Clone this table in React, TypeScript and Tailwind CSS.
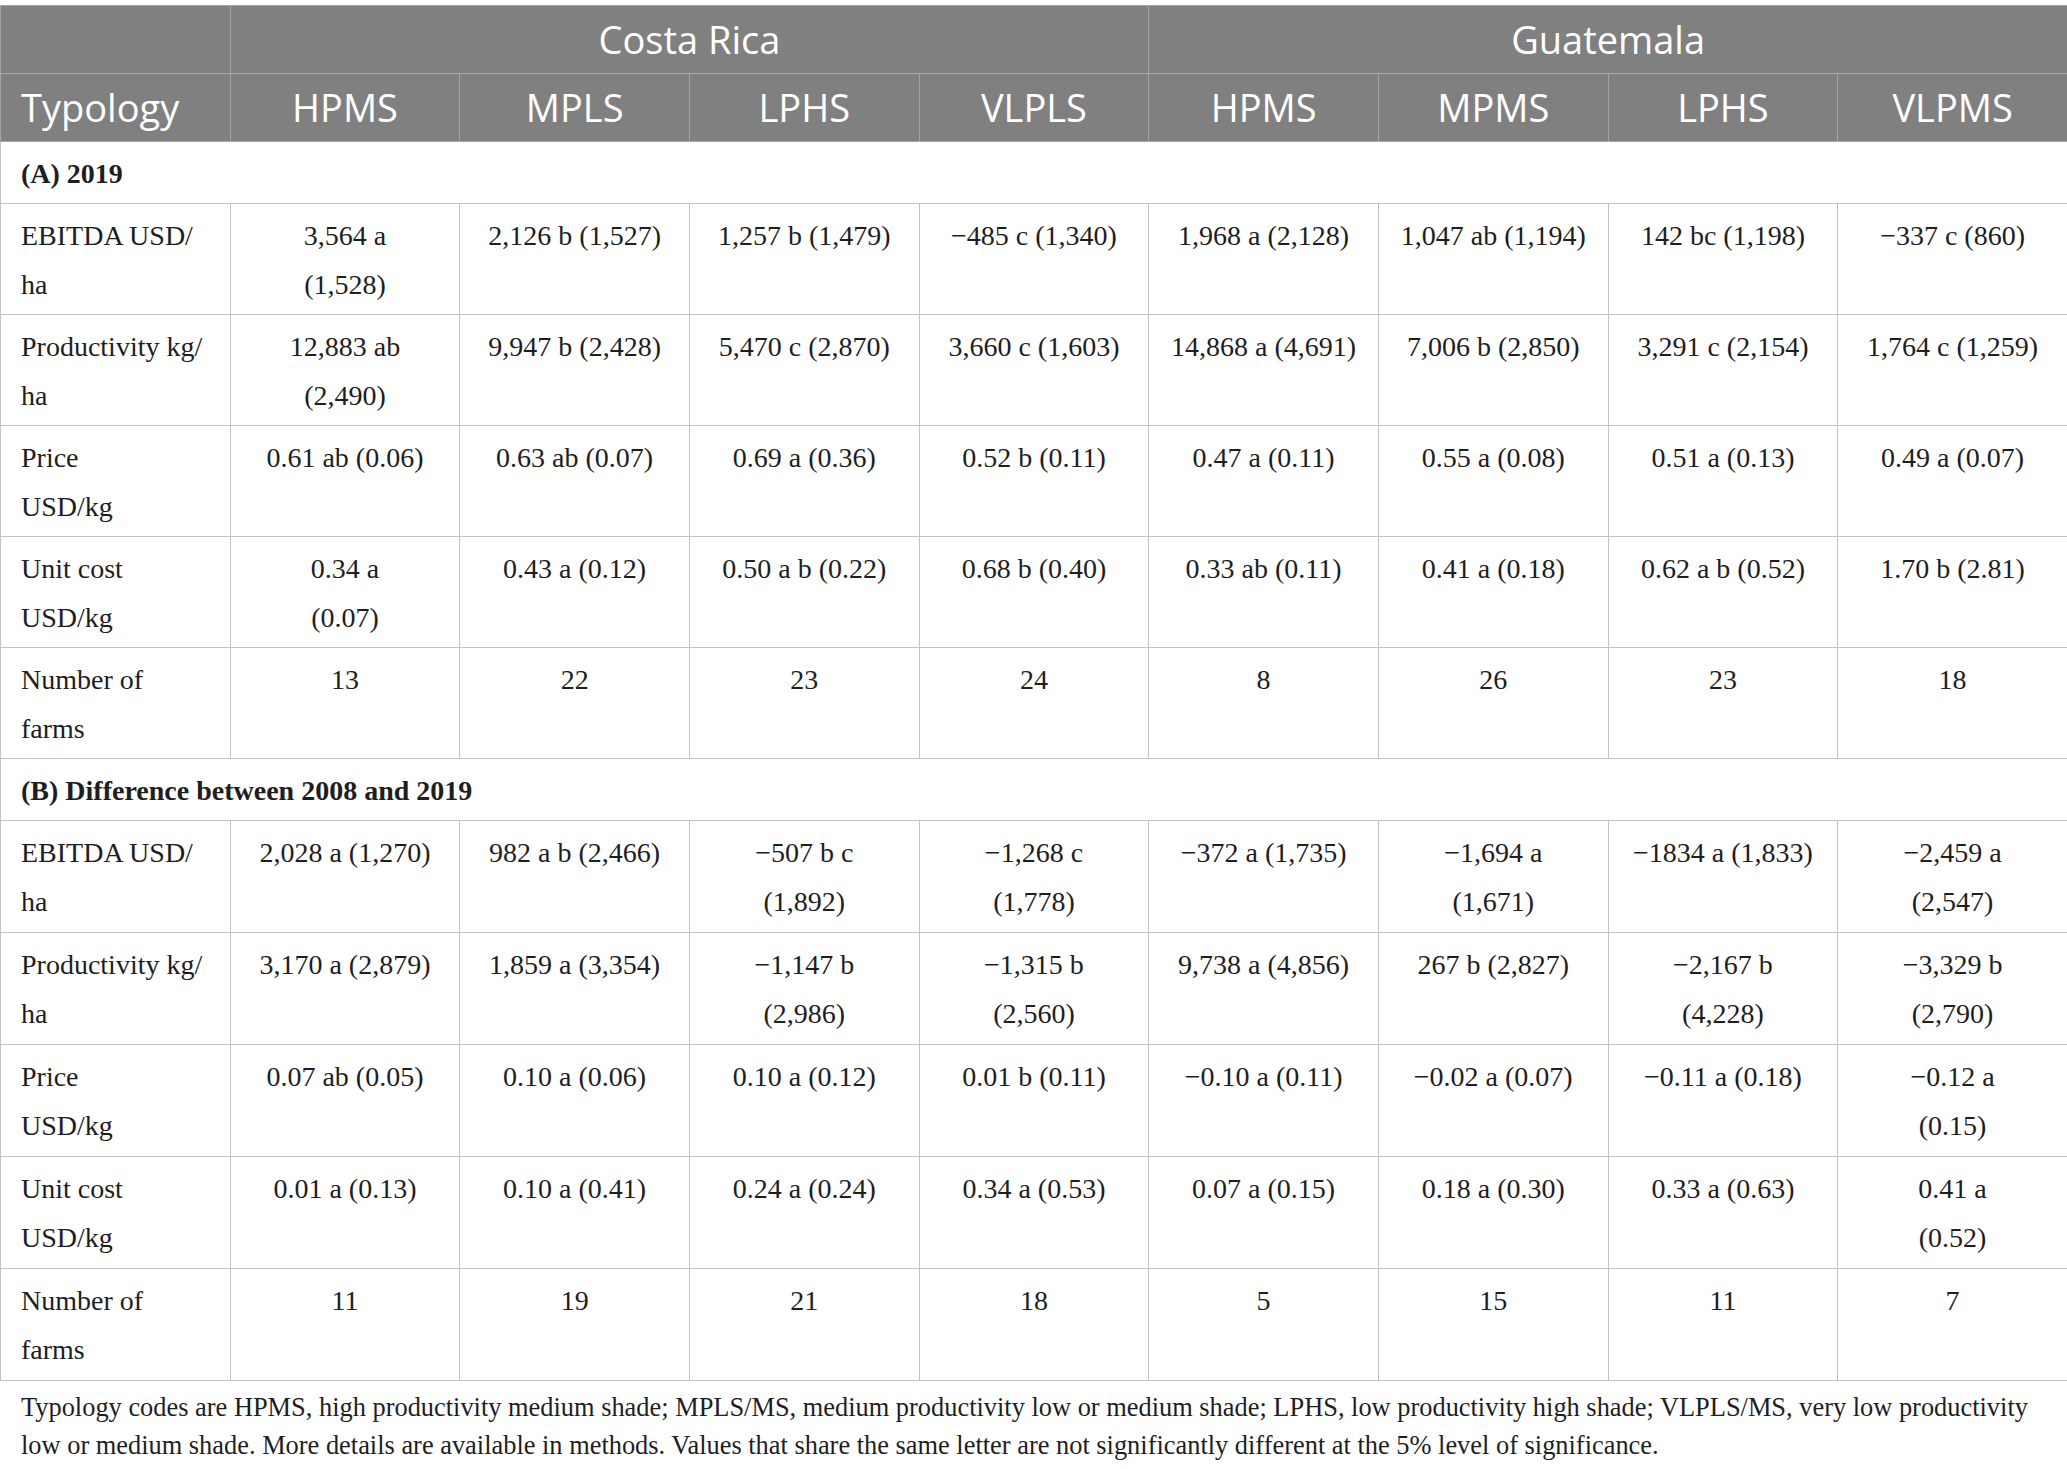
import React from 'react';

type Cell = string | string[];
type Row = { label: string[]; cells: Cell[] };

const SERIF = "font-['Liberation_Serif','Times_New_Roman',serif]";
const SANS = "font-['Open_Sans','Noto_Sans',sans-serif]";

const sectionA: Row[] = [
  {
    label: ['EBITDA USD/', 'ha'],
    cells: [['3,564 a', '(1,528)'], '2,126 b (1,527)', '1,257 b (1,479)', '−485 c (1,340)', '1,968 a (2,128)', '1,047 ab (1,194)', '142 bc (1,198)', '−337 c (860)'],
  },
  {
    label: ['Productivity kg/', 'ha'],
    cells: [['12,883 ab', '(2,490)'], '9,947 b (2,428)', '5,470 c (2,870)', '3,660 c (1,603)', '14,868 a (4,691)', '7,006 b (2,850)', '3,291 c (2,154)', '1,764 c (1,259)'],
  },
  {
    label: ['Price', 'USD/kg'],
    cells: ['0.61 ab (0.06)', '0.63 ab (0.07)', '0.69 a (0.36)', '0.52 b (0.11)', '0.47 a (0.11)', '0.55 a (0.08)', '0.51 a (0.13)', '0.49 a (0.07)'],
  },
  {
    label: ['Unit cost', 'USD/kg'],
    cells: [['0.34 a', '(0.07)'], '0.43 a (0.12)', '0.50 a b (0.22)', '0.68 b (0.40)', '0.33 ab (0.11)', '0.41 a (0.18)', '0.62 a b (0.52)', '1.70 b (2.81)'],
  },
  {
    label: ['Number of', 'farms'],
    cells: ['13', '22', '23', '24', '8', '26', '23', '18'],
  },
];

const sectionB: Row[] = [
  {
    label: ['EBITDA USD/', 'ha'],
    cells: ['2,028 a (1,270)', '982 a b (2,466)', ['−507 b c', '(1,892)'], ['−1,268 c', '(1,778)'], '−372 a (1,735)', ['−1,694 a', '(1,671)'], '−1834 a (1,833)', ['−2,459 a', '(2,547)']],
  },
  {
    label: ['Productivity kg/', 'ha'],
    cells: ['3,170 a (2,879)', '1,859 a (3,354)', ['−1,147 b', '(2,986)'], ['−1,315 b', '(2,560)'], '9,738 a (4,856)', '267 b (2,827)', ['−2,167 b', '(4,228)'], ['−3,329 b', '(2,790)']],
  },
  {
    label: ['Price', 'USD/kg'],
    cells: ['0.07 ab (0.05)', '0.10 a (0.06)', '0.10 a (0.12)', '0.01 b (0.11)', '−0.10 a (0.11)', '−0.02 a (0.07)', '−0.11 a (0.18)', ['−0.12 a', '(0.15)']],
  },
  {
    label: ['Unit cost', 'USD/kg'],
    cells: ['0.01 a (0.13)', '0.10 a (0.41)', '0.24 a (0.24)', '0.34 a (0.53)', '0.07 a (0.15)', '0.18 a (0.30)', '0.33 a (0.63)', ['0.41 a', '(0.52)']],
  },
  {
    label: ['Number of', 'farms'],
    cells: ['11', '19', '21', '18', '5', '15', '11', '7'],
  },
];

const typologies = ['HPMS', 'MPLS', 'LPHS', 'VLPLS', 'HPMS', 'MPMS', 'LPHS', 'VLPMS'];

const lines = (c: Cell) => {
  const arr = Array.isArray(c) ? c : [c];
  return arr.map((l, i) => (
    <React.Fragment key={i}>
      {i > 0 && <br />}
      {l}
    </React.Fragment>
  ));
};

const td = 'border border-[#c3c3c3] px-[20px] pt-[7px] pb-0 align-top text-[28px] leading-[49px] text-[#1e1e1e]';
const th = 'border border-[#a6a6a6] bg-[#808080] text-white font-normal text-[38px] align-middle';

function Section({ title, rows, rowH }: { title: string; rows: Row[]; rowH: string }) {
  return (
    <>
      <tr className="h-[62px]">
        <td colSpan={9} className={`${td} font-bold text-left`}>{title}</td>
      </tr>
      {rows.map((r, i) => (
        <tr key={i} className={rowH}>
          <td className={`${td} text-left`}>{lines(r.label)}</td>
          {r.cells.map((c, j) => (
            <td key={j} className={`${td} text-center`}>{lines(c)}</td>
          ))}
        </tr>
      ))}
    </>
  );
}

export default function App() {
  return (
    <div className={`w-[2067px] min-h-[1469px] bg-white pt-[5px] ${SERIF}`}>
      <table className="w-full table-fixed border-collapse">
        <colgroup>
          {Array.from({ length: 9 }).map((_, i) => (
            <col key={i} className="w-[229.67px]" />
          ))}
        </colgroup>
        <thead className={SANS}>
          <tr className="h-[68px]">
            <th className={th}></th>
            <th colSpan={4} className={`${th} text-center`}>Costa Rica</th>
            <th colSpan={4} className={`${th} text-center`}>Guatemala</th>
          </tr>
          <tr className="h-[68px]">
            <th className={`${th} text-left pl-[20px]`}>Typology</th>
            {typologies.map((t, i) => (
              <th key={i} className={`${th} text-center`}>{t}</th>
            ))}
          </tr>
        </thead>
        <tbody>
          <Section title="(A) 2019" rows={sectionA} rowH="h-[111px]" />
          <Section title="(B) Difference between 2008 and 2019" rows={sectionB} rowH="h-[112px]" />
        </tbody>
      </table>
      <p className="pl-[21px] pt-[7px] text-[26.4px] leading-[38px] text-[#1e1e1e]">
        Typology codes are HPMS, high productivity medium shade; MPLS/MS, medium productivity low or medium shade; LPHS, low productivity high shade; VLPLS/MS, very low productivity
        <br />
        low or medium shade. More details are available in methods. Values that share the same letter are not significantly different at the 5% level of significance.
      </p>
    </div>
  );
}
